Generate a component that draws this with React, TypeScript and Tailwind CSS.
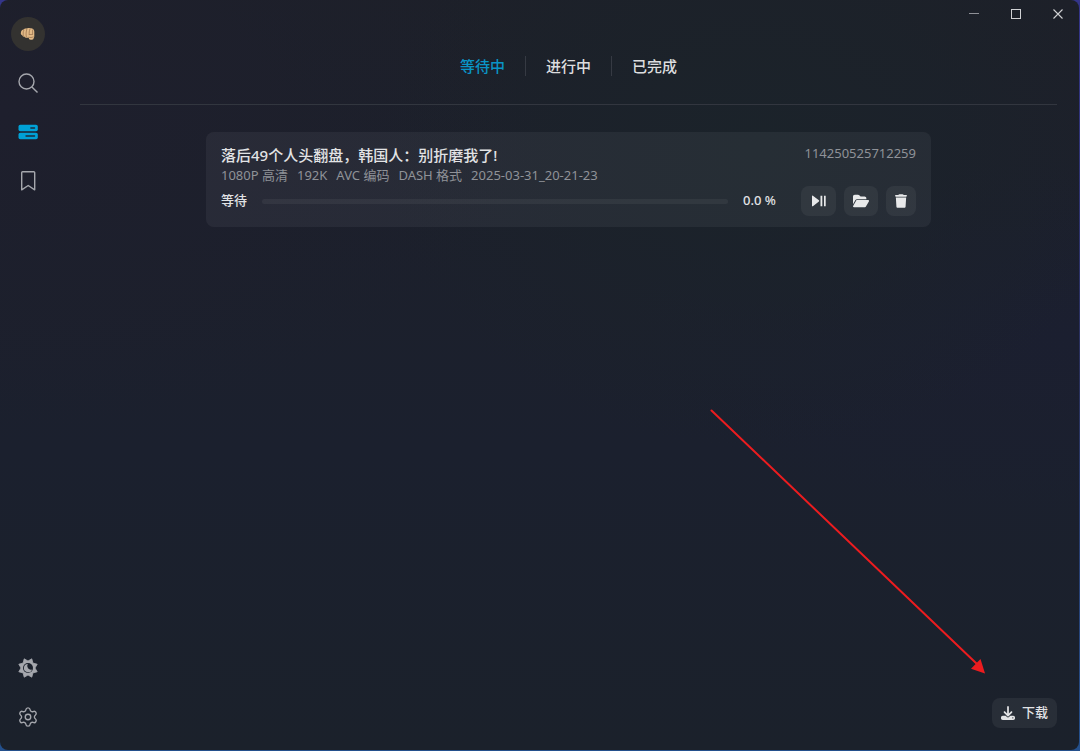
import { useState } from 'react'
import type { ReactNode } from 'react'
import { Settings } from 'lucide-react'
import { FaDownload, FaFolderOpen, FaTrash } from 'react-icons/fa6'
import clsx from 'clsx'

type TabKey = 'waiting' | 'doing' | 'complete'

interface Task {
  id: string
  title: string
  meta: string[]
  status: string
  progress: number
}

const tabs: { key: TabKey; label: string }[] = [
  { key: 'waiting', label: '等待中' },
  { key: 'doing', label: '进行中' },
  { key: 'complete', label: '已完成' }
]

const queue: Record<TabKey, Task[]> = {
  waiting: [
    {
      id: '114250525712259',
      title: '落后49个人头翻盘，韩国人：别折磨我了!',
      meta: ['1080P 高清', '192K', 'AVC 编码', 'DASH 格式', '2025-03-31_20-21-23'],
      status: '等待',
      progress: 0
    }
  ],
  doing: [],
  complete: []
}

function FistIcon() {
  return (
    <svg width="16" height="14" viewBox="0 0 16 14" aria-hidden="true">
      <path
        d="M1 5C1.300 3.600 2.400 2.700 3.600 2.600 4.200 1.600 5.400 1.200 6.600 1.500 7.600.8 9 .8 10 1.300c1.300-.4 2.500-.1 3 .8.9.6 1.300 1.600 1.300 2.700v4.400c0 .8-.3 1.400-.7 1.900.1.900-.6 1.600-1.600 1.600h-1.300c-1.200 0-2-.8-1.900-2H6.400c-.9.300-1.800-.2-2.100-1.100-1 .2-1.800-.4-2-1.300C1.300 8 .8 7.300.8 6.500Z"
        fill="#e2b985"
      />
      <path
        d="M3.800 3.300C3 5 3 6.800 3.400 8.500M6.800 2.200C6 4.800 5.900 7.300 6.300 9.800M9.900 2.200C9.200 4 9 5.800 9.200 7.400M9.200 7.600l3.400-.2M8.800 10.300c1.500.5 3 .4 4.300-.4M12.600 3v4"
        fill="none"
        stroke="#9a7550"
        strokeWidth="0.8"
        strokeLinecap="round"
      />
    </svg>
  )
}

function SearchIcon() {
  return (
    <svg width="20" height="20" viewBox="0 0 20 20" fill="none" stroke="currentColor" strokeWidth="1.400" aria-hidden="true">
      <circle cx="8.500" cy="8.500" r="7.500" />
      <path d="M13.900 13.900l5.600 5.600" />
    </svg>
  )
}

function QueueIcon() {
  return (
    <svg width="20" height="20" viewBox="0 0 20 20" aria-hidden="true">
      <rect x="0.500" y="2.800" width="19.300" height="6.400" rx="1.800" fill="currentColor" />
      <rect x="0.500" y="10.800" width="19.300" height="6.400" rx="1.800" fill="currentColor" />
      <path d="M12.800 6h3.800M8 14h8.600" stroke="#1d2a3a" strokeWidth="1.300" strokeLinecap="round" />
    </svg>
  )
}

function BookmarkIcon() {
  return (
    <svg width="20" height="20" viewBox="0 0 20 20" fill="none" stroke="currentColor" strokeWidth="1.400" strokeLinejoin="round" aria-hidden="true">
      <path d="M3.700 1.600q0-.9.900-.9h11.200q.9 0 .9.900v17.200L10.200 14.500 3.700 18.800Z" />
    </svg>
  )
}

function ThemeIcon() {
  return (
    <svg width="20" height="20" viewBox="0 0 20 20" aria-hidden="true">
      <path
        d="M6.200.800 10 3 13.800.8 14.900 5.100 19.200 6.200 17 10 19.200 13.800 14.900 14.900 13.800 19.200 10 17 6.200 19.200 5.100 14.900.8 13.800 3 10 .8 6.200 5.100 5.100Z"
        fill="currentColor"
        stroke="currentColor"
        strokeWidth="0.800"
        strokeLinejoin="round"
      />
      <circle cx="10" cy="10" r="5" fill="#1b212c" />
      <path d="M9.800 5.900A4.200 4.200 0 1 0 14.100 11.400 3.700 3.700 0 0 1 9.800 5.900Z" fill="currentColor" />
    </svg>
  )
}

function PlayPauseIcon() {
  return (
    <svg width="17" height="14" viewBox="0 0 17 14" fill="currentColor" aria-hidden="true">
      <path d="M2 2.200q0-1 .9-.5L8.900 6.300q.7.600 0 1.200L2.900 12.200q-.9.500-.9-.5ZM10.500 1.700h1.800v10.600h-1.800ZM14 1.700h1.700v10.600H14Z" />
    </svg>
  )
}

function NavButton({ label, active, children }: { label: string; active?: boolean; children: ReactNode }) {
  return (
    <button
      type="button"
      aria-label={label}
      className={clsx(
        'flex size-[34px] items-center justify-center rounded-md',
        active ? 'text-[#00a1d6]' : 'text-[#a5a7ad] hover:text-white'
      )}
    >
      {children}
    </button>
  )
}

function ActionButton({ label, children }: { label: string; children: ReactNode }) {
  return (
    <button
      type="button"
      aria-label={label}
      className="flex h-[30px] items-center rounded-lg bg-white/5 px-[9px] text-[#e8e9ea] hover:bg-white/10"
    >
      {children}
    </button>
  )
}

function Sidebar() {
  return (
    <nav className="flex w-14 shrink-0 flex-col items-center justify-between pt-[17px] pb-4">
      <div className="flex flex-col gap-[15px]">
        <button
          type="button"
          aria-label="账号"
          className="flex size-[34px] items-center justify-center rounded-full bg-[#333230]"
        >
          <FistIcon />
        </button>
        <NavButton label="搜索">
          <SearchIcon />
        </NavButton>
        <NavButton label="下载队列" active>
          <QueueIcon />
        </NavButton>
        <NavButton label="收藏">
          <BookmarkIcon />
        </NavButton>
      </div>
      <div className="flex flex-col gap-[15px]">
        <NavButton label="主题">
          <ThemeIcon />
        </NavButton>
        <NavButton label="设置">
          <Settings size={22} strokeWidth={1.5} />
        </NavButton>
      </div>
    </nav>
  )
}

function WindowControls() {
  const base = 'flex h-7 w-[42px] items-center justify-center text-[#d0d1d4] hover:bg-white/10'
  return (
    <div className="flex justify-end">
      <button type="button" aria-label="最小化" className={base}>
        <svg width="10" height="10" viewBox="0 0 10 10" stroke="#8e9096">
          <path d="M0 4.500h10" />
        </svg>
      </button>
      <button type="button" aria-label="最大化" className={base}>
        <svg width="10" height="10" viewBox="0 0 10 10" fill="none" stroke="currentColor">
          <rect x="0.500" y="0.500" width="9" height="9" />
        </svg>
      </button>
      <button type="button" aria-label="关闭" className={base}>
        <svg width="10" height="10" viewBox="0 0 10 10" stroke="currentColor" strokeWidth="1.100">
          <path d="M.5.500l9 9M9.500.500l-9 9" />
        </svg>
      </button>
    </div>
  )
}

function TaskCard({ task }: { task: Task }) {
  return (
    <article className="mx-auto w-full max-w-[725px] rounded-lg bg-white/5 px-[15px] pt-3 pb-[11px]">
      <div className="flex items-start justify-between gap-4">
        <div className="min-w-0">
          <h2 className="truncate text-[15px] leading-[22px] font-medium text-[#e2e3e5]">{task.title}</h2>
          <div className="flex flex-wrap gap-x-[9px] text-[13px] leading-[18px] text-[#8f9298]">
            {task.meta.map(item => (
              <span key={item}>{item}</span>
            ))}
          </div>
        </div>
        <span className="text-[13px] leading-[18px] text-[#8f9298]">{task.id}</span>
      </div>
      <div className="mt-0.5 flex items-center text-[13px] font-medium text-[#e2e3e5]">
        <span className="shrink-0">{task.status}</span>
        <div
          role="progressbar"
          aria-label={task.title}
          aria-valuenow={task.progress}
          className="mx-[15px] h-[5px] grow overflow-hidden rounded-full bg-white/5"
        >
          <div className="h-full bg-[#00a1d6]" style={{ width: `${task.progress}%` }} />
        </div>
        <span className="w-[58px] shrink-0">{task.progress.toFixed(1)} %</span>
        <div className="flex gap-2">
          <ActionButton label="继续或暂停">
            <PlayPauseIcon />
          </ActionButton>
          <ActionButton label="打开文件夹">
            <FaFolderOpen size={16} />
          </ActionButton>
          <ActionButton label="删除">
            <FaTrash className="h-[14px] w-3" />
          </ActionButton>
        </div>
      </div>
    </article>
  )
}

function PointerArrow() {
  return (
    <svg
      width="276"
      height="265"
      viewBox="0 0 276 265"
      className="pointer-events-none absolute right-[93px] bottom-[76px]"
      aria-hidden="true"
    >
      <path d="M1.500 1.500L267 255" stroke="#ec1c1f" strokeWidth="2" strokeLinecap="round" />
      <path d="M275 264.500L261 259.800 270.500 250Z" fill="#ec1c1f" />
    </svg>
  )
}

export default function App() {
  const [tab, setTab] = useState<TabKey>('waiting')

  return (
    <div className="flex min-h-screen bg-linear-to-b from-[#34358a] via-[#29305a] to-[#24508c] pr-px pb-px font-['Noto_Sans','Noto_Sans_CJK_SC',sans-serif]">
      <div className="relative flex grow rounded-lg bg-[#1b202c] bg-[radial-gradient(ellipse_at_0%_15%,#1e1f2d_0%,transparent_35%),radial-gradient(ellipse_at_70%_20%,#1b232a_0%,transparent_35%),radial-gradient(ellipse_at_100%_45%,#1b1f30_0%,transparent_30%),linear-gradient(to_bottom,#1d2029,#1b202e_60%,#1b212b)]">
        <Sidebar />
        <main className="flex min-w-0 grow flex-col">
          <WindowControls />
          <div className="flex grow flex-col pr-[22px] pl-6">
            <header className="flex h-[77px] items-center justify-center border-b border-[#32363f] divide-x divide-[#363a43]">
              {tabs.map(item => (
                <button
                  key={item.key}
                  type="button"
                  onClick={() => setTab(item.key)}
                  className={clsx(
                    'h-5 px-5 text-[15px] leading-5 font-medium',
                    tab === item.key ? 'text-[#0a94c6]' : 'text-[#dcdddf]'
                  )}
                >
                  {item.label}
                </button>
              ))}
            </header>
            <section className="flex grow flex-col gap-3 pt-[27px]">
              {queue[tab].map(task => (
                <TaskCard key={task.id} task={task} />
              ))}
            </section>
            <footer className="flex justify-end pb-[22px]">
              <button
                type="button"
                className="flex h-[30px] items-center gap-[7px] rounded-lg bg-white/6 px-[9px] text-[13px] font-medium text-[#e2e3e5] hover:bg-white/10"
              >
                <FaDownload size={14} />
                <span>下载</span>
              </button>
            </footer>
          </div>
        </main>
        <PointerArrow />
      </div>
    </div>
  )
}
